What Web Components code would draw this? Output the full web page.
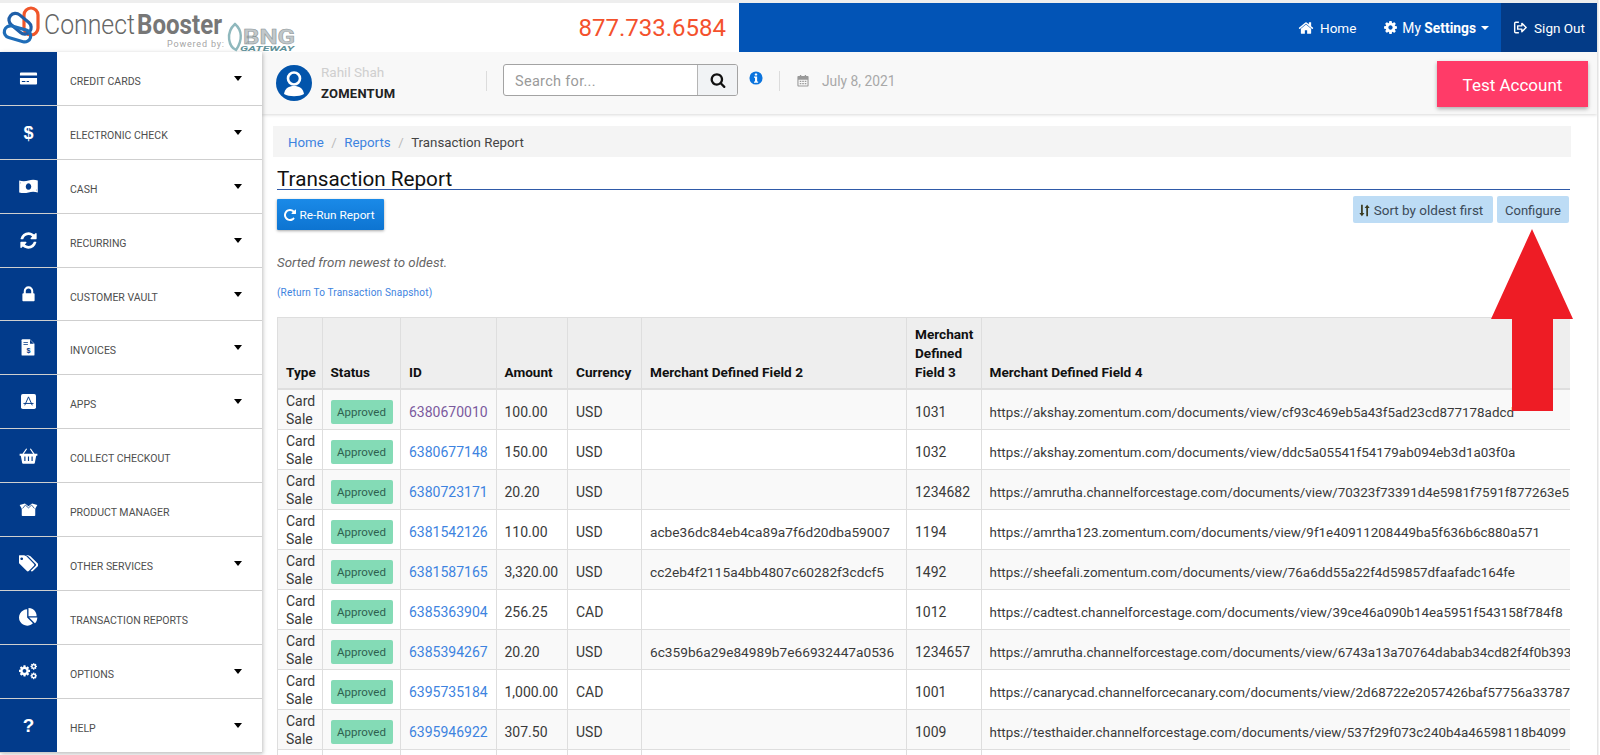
<!DOCTYPE html>
<html>
<head>
<meta charset="utf-8">
<title>Transaction Report</title>
<style>
    html, body { margin: 0; height: 755px; overflow: hidden; background: #fff; }
    body { font-family: Roboto, "Liberation Sans", sans-serif; color: #333; }
</style>
</head>
<body>
<cb-app>
    <cb-header></cb-header>
    <cb-sidebar>
        <cb-nav-item icon="card" caret>Credit Cards</cb-nav-item>
        <cb-nav-item icon="dollar" caret>Electronic Check</cb-nav-item>
        <cb-nav-item icon="money" caret>Cash</cb-nav-item>
        <cb-nav-item icon="refresh" caret>Recurring</cb-nav-item>
        <cb-nav-item icon="lock" caret>Customer Vault</cb-nav-item>
        <cb-nav-item icon="invoice" caret>Invoices</cb-nav-item>
        <cb-nav-item icon="apps" caret>Apps</cb-nav-item>
        <cb-nav-item icon="basket">Collect Checkout</cb-nav-item>
        <cb-nav-item icon="box">Product Manager</cb-nav-item>
        <cb-nav-item icon="tags" caret>Other Services</cb-nav-item>
        <cb-nav-item icon="pie">Transaction Reports</cb-nav-item>
        <cb-nav-item icon="cogs" caret>Options</cb-nav-item>
        <cb-nav-item icon="question" caret>Help</cb-nav-item>
    </cb-sidebar>
    <cb-main>
        <cb-topbar></cb-topbar>
        <cb-report></cb-report>
    </cb-main>
    <cb-arrow></cb-arrow>
</cb-app>

<script>
// FontAwesome 4 style paths, all on the 1792 grid
const ICONS = {
    home: 'M1472 992v480q0 26-19 45t-45 19h-384v-384h-256v384h-384q-26 0-45-19t-19-45v-480q0-1 .5-3t.5-3l575-474 575 474q1 2 1 6zm223-69l-62 74q-8 9-21 11h-3q-13 0-21-7l-692-577-692 577q-12 8-24 7-13-2-21-11l-62-74q-8-10-7-23.5t11-21.5l719-599q32-26 76-26t76 26l244 204v-195q0-14 9-23t23-9h192q14 0 23 9t9 23v408l219 182q10 8 11 21.5t-7 23.5z',
    cog: 'M1152 896q0-106-75-181t-181-75-181 75-75 181 75 181 181 75 181-75 75-181zm512-109v222q0 12-8 23t-20 13l-185 28q-19 54-39 91 35 50 107 138 10 12 10 25t-9 23q-27 37-99 108t-94 71q-12 0-26-9l-138-108q-44 23-91 38-16 136-29 186-7 28-36 28h-222q-14 0-24.5-8.5t-11.5-21.5l-28-184q-49-16-90-37l-141 107q-10 9-25 9-14 0-25-11-126-114-165-168-7-10-7-23 0-12 8-23 15-21 51-66.5t54-70.5q-27-50-41-99l-183-27q-13-2-21-12.5t-8-23.5v-222q0-12 8-23t19-13l186-28q14-46 39-92-40-57-107-138-10-12-10-24 0-10 9-23 26-36 98.5-107.5t94.5-71.5q13 0 26 10l138 107q44-23 91-38 16-136 29-186 7-28 36-28h222q14 0 24.5 8.5t11.5 21.5l28 184q49 16 90 37l142-107q9-9 24-9 13 0 25 10 129 119 165 170 7 8 7 22 0 12-8 23-15 21-51 66.5t-54 70.5q26 50 41 98l183 28q13 2 21 12.5t8 23.5z',
    search: 'M1216 832q0-185-131.5-316.5t-316.5-131.5-316.5 131.5-131.5 316.5 131.5 316.5 316.5 131.5 316.5-131.5 131.5-316.5zm512 832q0 52-38 90t-90 38q-54 0-90-38l-343-342q-179 124-399 124-143 0-273.5-55.5t-225-150-150-225-55.5-273.5 55.5-273.5 150-225 225-150 273.5-55.5 273.5 55.5 225 150 150 225 55.5 273.5q0 220-124 399l343 343q37 37 37 90z',
    refresh: 'M1639 1056q0 5-1 7-64 268-268 434.5t-478 166.5q-146 0-282.5-55t-243.5-157l-129 129q-19 19-45 19t-45-19-19-45v-448q0-26 19-45t45-19h448q26 0 45 19t19 45-19 45l-137 137q71 66 161 102t187 36q134 0 250-65t186-179q11-17 53-117 8-23 30-23h192q13 0 22.5 9.5t9.5 22.5zm25-800v448q0 26-19 45t-45 19h-448q-26 0-45-19t-19-45 19-45l138-138q-148-137-349-137-134 0-250 65t-186 179q-11 17-53 117-8 23-30 23h-199q-13 0-22.5-9.5t-9.5-22.5v-7q65-268 270-434.5t480-166.5q146 0 284 55.5t245 156.5l130-129q19-19 45-19t45 19 19 45z',
    repeat: 'M1664 256v448q0 26-19 45t-45 19h-448q-42 0-59-40-17-39 14-69l138-138q-148-137-349-137-104 0-198.5 40.5t-163.5 109.5-109.5 163.5-40.5 198.5 40.5 198.5 109.5 163.5 163.5 109.5 198.5 40.5q119 0 225-52t179-147q7-10 23-12 15 0 25 9l137 138q9 8 9.5 20.5t-7.5 22.5q-109 132-264 204.5t-327 72.5q-156 0-298-61t-245-164-164-245-61-298 61-298 164-245 245-164 298-61q147 0 284.5 55.5t244.5 156.5l130-129q29-31 70-14 39 17 39 59z',
    lock: 'M640 768h512v-192q0-106-75-181t-181-75-181 75-75 181v192zm832 96v576q0 40-28 68t-68 28h-960q-40 0-68-28t-28-68v-576q0-40 28-68t68-28h32v-192q0-184 132-316t316-132 316 132 132 316v192h32q40 0 68 28t28 68z',
    tags: 'M384 448q0-53-37.5-90.5t-90.5-37.5-90.5 37.5-37.5 90.5 37.5 90.5 90.5 37.5 90.5-37.5 37.5-90.5zm1067 576q0 53-37 90l-491 492q-39 37-91 37-53 0-90-37l-715-716q-38-37-64.5-101t-26.5-117v-416q0-52 38-90t90-38h416q53 0 117 26.5t102 64.5l715 714q37 39 37 91zm384 0q0 53-37 90l-491 492q-39 37-91 37-36 0-59-14t-53-45l470-470q37-37 37-90 0-52-37-91l-715-714q-38-38-102-64.5t-117-26.5h224q53 0 117 26.5t102 64.5l715 714q37 39 37 91z',
    pie: 'M768 890l546 546q-106 108-247.5 168t-298.5 60q-209 0-385.5-103t-279.5-279.5-103-385.5 103-385.5 279.5-279.5 385.5-103v762zm187 6h773q0 157-60 298.5t-168 247.5zm709-128h-768v-768q209 0 385.5 103t279.5 279.5 103 385.5z'
};

function fa(name, fill = 'currentColor', extra = '') {
    return `<path fill="${fill}" ${extra} d="${ICONS[name]}"/>`;
}

// hand drawn ones, same 1792 grid so cb-icon can treat them alike
const DRAWN = {
    card: `<path fill="currentColor" fill-rule="evenodd" d="M180 330h1432q90 0 90 90v950q0 90-90 90H180q-90 0-90-90V420q0-90 90-90zM90 620v240h1612V620zM270 1120v110h330v-110zM720 1120v110h220v-110z"/>`,
    money: `<path fill="currentColor" fill-rule="evenodd" d="M20 330q440 120 876 0t876 0v1130q-440-120-876 0t-876 0zM896 590a260 310 0 1 0 .1 0zM130 500a110 110 0 0 1-20 140V500zM1660 1290a110 110 0 0 1 20-140v140z"/>`,
    invoice: `<path fill="currentColor" d="M330 120h700l430 430v1020q0 90-90 90H330q-90 0-90-90V210q0-90 90-90z"/><path fill="#033a86" d="M1040 170l370 380h-370zM420 400h420v70H420zM420 560h420v70H420z"/><text x="896" y="1440" text-anchor="middle" font-family="Liberation Sans" font-weight="700" font-size="680" fill="#033a86">$</text>`,
    apps: `<rect x="190" y="190" width="1412" height="1412" rx="170" fill="currentColor"/><path fill="none" stroke="#033a86" stroke-width="90" d="M896 460L540 1260M896 460l356 800M420 1080h950"/>`,
    basket: `<path fill="currentColor" fill-rule="evenodd" d="M60 720h1672v200h-110l-130 680q-10 70-90 70H390q-80 0-90-70L170 920H60zM500 980v440h110V980zM840 980v440h110V980zM1180 980v440h110V980z"/><path fill="none" stroke="currentColor" stroke-width="110" d="M370 760L720 260M1420 760L1070 260"/>`,
    box: `<path fill="currentColor" d="M60 470L560 340 896 590 1232 340 1732 470 1540 790H252z"/><path fill="currentColor" d="M260 740H1532V1450q0 70-70 70H330q-70 0-70-70z"/><path fill="none" stroke="#033a86" stroke-width="70" d="M340 800L600 480 896 740 1192 480 1452 800"/>`,
    cogs: `<g transform="translate(-90 230) scale(.68)">${fa('cog')}</g><g transform="translate(1030 60) scale(.4)">${fa('cog')}</g><g transform="translate(1030 950) scale(.4)">${fa('cog')}</g>`,
    dollar: `<text x="896" y="1500" text-anchor="middle" font-family="Liberation Sans" font-weight="700" font-size="1700" fill="currentColor">$</text>`,
    question: `<text x="896" y="1540" text-anchor="middle" font-family="Liberation Sans" font-weight="700" font-size="1780" fill="currentColor">?</text>`,
    signout: `<path fill="none" stroke="currentColor" stroke-width="170" d="M700 260H330q-130 0-130 130v1010q0 130 130 130h370"/><path fill="none" stroke="currentColor" stroke-width="170" stroke-linejoin="round" d="M1060 400l510 496-510 496v-300H560V700h500z"/>`,
    info: `<circle cx="896" cy="896" r="840" fill="#0b74de"/><rect x="740" y="320" width="310" height="240" rx="50" fill="#fff"/><path fill="#fff" d="M640 700h400v640h130v150H640v-150h130V850H640z"/>`,
    calendar: `<path fill="currentColor" fill-rule="evenodd" d="M300 240h200V120h170v120h450V120h170v120h200q120 0 120 120v1110q0 120-120 120H300q-120 0-120-120V360q0-120 120-120zM320 720v740q0 20 20 20h1110q20 0 20-20V720zM480 860h200v170H480zM800 860h200v170H800zM1120 860h200v170h-200zM480 1150h200v170H480zM800 1150h200v170H800zM1120 1150h200v170h-200z"/>`,
    sort: `<path fill="currentColor" d="M420 120h240v1130h230L540 1680 190 1250h230z"/><path fill="currentColor" d="M1140 1680h240V550h230L1260 120 910 550h230z"/>`
};

class CbIcon extends HTMLElement {
    constructor() {
        super();
        this.attachShadow({ mode: 'open' });
    }

    connectedCallback() {
        const name = this.getAttribute('name');
        const size = this.getAttribute('size') || 16;
        const inner = DRAWN[name] || fa(name);
        this.shadowRoot.innerHTML = `
            <style>
                :host { display: inline-flex; width: ${size}px; height: ${size}px; flex: none; }
                svg { width: 100%; height: 100%; display: block; }
            </style>
            <svg viewBox="0 0 1792 1792" aria-hidden="true">${inner}</svg>
        `;
    }
}

class CbApp extends HTMLElement {
    constructor() {
        super();
        this.attachShadow({ mode: 'open' });
        this.shadowRoot.innerHTML = `
            <style>
                :host {
                    display: grid;
                    grid-template-columns: 262px 1fr;
                    grid-template-rows: 49px 703px;
                    width: 1597px;
                    height: 755px;
                    box-sizing: border-box;
                    border-top: 3px solid #eeeeee;
                    position: relative;
                    overflow: hidden;
                    box-shadow: 1.5px 0 0 #e4e4e4;
                }
                ::slotted(cb-header) { grid-column: 1 / 3; }
            </style>
            <slot></slot>
        `;
    }
}

class CbHeader extends HTMLElement {
    constructor() {
        super();
        this.attachShadow({ mode: 'open' });
        this.shadowRoot.innerHTML = `
            <style>
                :host { display: flex; height: 49px; position: relative; z-index: 2; }
                .brand { width: 739px; display: flex; justify-content: space-between; align-items: center; padding-right: 13px; box-sizing: border-box; }
                .logo { flex: none; display: block; }
                .phone { font-size: 24px; color: #f4512c; }
                nav { flex: 1; display: flex; justify-content: flex-end; background: #0254b6; color: #fff; font-size: 13.5px; }
                .link { display: flex; align-items: center; gap: 6px; }
                .home { margin-right: 27px; }
                .settings { margin-right: 12px; gap: 4px; font-size: 13.8px; }
                .settings b { font-weight: 700; }
                .mini { border: 4px solid transparent; border-top-color: #fff; border-bottom: 0; margin-left: 1px; }
                .out { width: 96px; background: #033b87; justify-content: center; }
            </style>
            <div class="brand">
                <svg class="logo" width="300" height="49" viewBox="0 3 300 49">
                    <g fill="none" stroke-width="3.2">
                        <rect x="24" y="8" width="14" height="27" rx="7" stroke="#f0562a"/>
                        <rect x="8" y="17" width="25" height="13" rx="6.5" stroke="#1f5fa8" transform="rotate(40 20 23)"/>
                        <rect x="4" y="28" width="27" height="12" rx="6" stroke="#1f6db8" transform="rotate(16 18 34)"/>
                    </g>
                    <text x="44" y="34" font-family="Roboto" font-size="27" font-weight="300" fill="#666" textLength="91" lengthAdjust="spacingAndGlyphs">Connect</text>
                    <text x="137" y="34" font-family="Roboto" font-size="27" font-weight="700" fill="#777" textLength="85" lengthAdjust="spacingAndGlyphs">Booster</text>
                    <text x="167" y="47" font-family="Roboto" font-size="9" fill="#a5a5a5" textLength="57">Powered by:</text>
                    <path d="M235 24c7 6 8 16 1 26-7-3-11-17-1-26z" fill="none" stroke="#8fb8bd" stroke-width="2.4"/>
                    <text x="243" y="44" font-family="Roboto" font-size="20" font-weight="700" fill="#c2c8ca" stroke="#8c9699" stroke-width=".5" textLength="52" lengthAdjust="spacingAndGlyphs">BNG</text>
                    <text x="240" y="50.5" font-family="Roboto" font-size="6.5" font-weight="700" font-style="italic" fill="#5f9199" textLength="54" lengthAdjust="spacingAndGlyphs">GATEWAY</text>
                </svg>
                <span class="phone">877.733.6584</span>
            </div>
            <nav>
                <span class="link home"><cb-icon name="home" size="16"></cb-icon>Home</span>
                <span class="link settings"><cb-icon name="cog" size="15"></cb-icon><span>My <b>Settings</b></span><i class="mini"></i></span>
                <span class="link out"><cb-icon name="signout" size="15"></cb-icon>Sign Out</span>
            </nav>
        `;
    }
}

class CbSidebar extends HTMLElement {
    constructor() {
        super();
        this.attachShadow({ mode: 'open' });
        this.shadowRoot.innerHTML = `
            <style>
                :host {
                    display: grid;
                    grid-auto-rows: 53.9px;
                    align-content: start;
                    background: #fff;
                    box-shadow: 1px 1px 4px rgba(0,0,0,.25);
                    position: relative;
                    z-index: 1;
                    height: 700.7px;
                }
            </style>
            <slot></slot>
        `;
    }
}

class CbNavItem extends HTMLElement {
    constructor() {
        super();
        this.attachShadow({ mode: 'open' });
    }

    connectedCallback() {
        const caret = this.hasAttribute('caret') ? '<i class="caret"></i>' : '';
        this.shadowRoot.innerHTML = `
            <style>
                :host { display: flex; border-bottom: 1.5px solid #cfcfcf; box-sizing: border-box; }
                .side { width: 57px; background: #023b8b; color: #fff; display: flex; justify-content: center; padding-top: 17px; box-sizing: border-box; }
                .label { flex: 1; padding: 23px 0 0 13px; font-size: 10.5px; line-height: 14px; color: #4e4e4e; text-transform: uppercase; }
                .caret { margin: 24px 20px 0 0; border: 4.5px solid transparent; border-top: 5px solid #000; border-bottom: 0; height: 0; }
            </style>
            <div class="side"><cb-icon name="${this.getAttribute('icon')}" size="19"></cb-icon></div>
            <div class="label"><slot></slot></div>
            ${caret}
        `;
    }
}

class CbMain extends HTMLElement {
    constructor() {
        super();
        this.attachShadow({ mode: 'open' });
        this.shadowRoot.innerHTML = `
            <style>
                :host { display: flex; flex-direction: column; min-width: 0; overflow: hidden; }
            </style>
            <slot></slot>
        `;
    }
}

class CbTopbar extends HTMLElement {
    constructor() {
        super();
        this.attachShadow({ mode: 'open' });
        this.shadowRoot.innerHTML = `
            <style>
                :host {
                    display: flex;
                    align-items: flex-start;
                    height: 62px;
                    box-sizing: border-box;
                    padding: 12px 9px 0 14px;
                    background: #f8f8f8;
                    box-shadow: 0 1px 3px rgba(0,0,0,.15);
                    flex: none;
                }
                .avatar { margin-top: 1px; flex: none; }
                .who { width: 165px; margin-left: 9px; flex: none; }
                .name { font-size: 13.5px; line-height: 16px; color: #cfcfcf; }
                .org { font-size: 13px; line-height: 16px; font-weight: 700; color: #222; margin-top: 6px; letter-spacing: .25px; }
                .sep { width: 1px; height: 20px; background: #dcdcdc; margin-top: 7px; flex: none; }
                .search { display: flex; width: 235px; height: 32px; margin-left: 16px; box-sizing: border-box; border: 1px solid #a3a3a3; border-radius: 3px; background: #fff; flex: none; }
                .search span { flex: 1; padding-left: 11px; font-size: 14.5px; letter-spacing: .3px; line-height: 33px; height: 30px; color: #9a9a9a; }
                .search button { width: 40px; border: 0; border-left: 1px solid #b5b5b5; background: #f1f3f5; color: #111; padding: 0; display: flex; align-items: center; justify-content: center; border-radius: 0 2px 2px 0; }
                .info { margin: 7px 0 0 11px; }
                .date { display: flex; align-items: center; gap: 12px; color: #a8a8a8; font-size: 13.8px; margin: 9px 0 0 16px; }
                .date cb-icon { color: #999; }
                .test { margin: -3px 0 0 auto; width: 151px; height: 46px; padding-top: 1px; box-sizing: border-box; background: #ff3b68; color: #fff; font-size: 17px; display: flex; align-items: center; justify-content: center; box-shadow: 0 2px 4px rgba(0,0,0,.3); flex: none; }
            </style>
            <svg class="avatar" width="36" height="36" viewBox="0 0 36 36">
                <circle cx="18" cy="18" r="18" fill="#0254ab"/>
                <circle cx="18" cy="13.5" r="6" fill="none" stroke="#fff" stroke-width="2.6"/>
                <path d="M8 29c1-6 5-8 10-8s9 2 10 8c-5 3-15 3-20 0z" fill="#fff"/>
            </svg>
            <div class="who"><div class="name">Rahil Shah</div><div class="org">ZOMENTUM</div></div>
            <div class="sep"></div>
            <div class="search"><span>Search for...</span><button><cb-icon name="search" size="16"></cb-icon></button></div>
            <cb-icon class="info" name="info" size="14"></cb-icon>
            <div class="sep" style="margin-left:16px"></div>
            <div class="date"><cb-icon name="calendar" size="14"></cb-icon>July 8, 2021</div>
            <div class="test">Test Account</div>
        `;
    }
}

class CbBadge extends HTMLElement {
    constructor() {
        super();
        this.attachShadow({ mode: 'open' });
        this.shadowRoot.innerHTML = `
            <style>
                :host { display: block; width: 62px; height: 24px; line-height: 25px; background: #84dbb6; color: #2f6150; font-size: 11.5px; text-align: center; border-radius: 2px; }
            </style>
            <slot></slot>
        `;
    }
}

const ROWS = [
    ['6380670010', '100.00', 'USD', '', '1031', 'https://akshay.zomentum.com/documents/view/cf93c469eb5a43f5ad23cd877178adcd'],
    ['6380677148', '150.00', 'USD', '', '1032', 'https://akshay.zomentum.com/documents/view/ddc5a05541f54179ab094eb3d1a03f0a'],
    ['6380723171', '20.20', 'USD', '', '1234682', 'https://amrutha.channelforcestage.com/documents/view/70323f73391d4e5981f7591f877263e5'],
    ['6381542126', '110.00', 'USD', 'acbe36dc84eb4ca89a7f6d20dba59007', '1194', 'https://amrtha123.zomentum.com/documents/view/9f1e40911208449ba5f636b6c880a571'],
    ['6381587165', '3,320.00', 'USD', 'cc2eb4f2115a4bb4807c60282f3cdcf5', '1492', 'https://sheefali.zomentum.com/documents/view/76a6dd55a22f4d59857dfaafadc164fe'],
    ['6385363904', '256.25', 'CAD', '', '1012', 'https://cadtest.channelforcestage.com/documents/view/39ce46a090b14ea5951f543158f784f8'],
    ['6385394267', '20.20', 'USD', '6c359b6a29e84989b7e66932447a0536', '1234657', 'https://amrutha.channelforcestage.com/documents/view/6743a13a70764dabab34cd82f4f0b393'],
    ['6395735184', '1,000.00', 'CAD', '', '1001', 'https://canarycad.channelforcecanary.com/documents/view/2d68722e2057426baf57756a33787'],
    ['6395946922', '307.50', 'USD', '', '1009', 'https://testhaider.channelforcestage.com/documents/view/537f29f073c240b4a46598118b4099']
];

class CbTable extends HTMLElement {
    constructor() {
        super();
        this.attachShadow({ mode: 'open' });
    }

    connectedCallback() {
        const body = ROWS.map((r, i) => `
            <tr>
                <td>Card Sale</td>
                <td><cb-badge>Approved</cb-badge></td>
                <td><a class="${i === 0 ? 'seen' : ''}">${r[0]}</a></td>
                <td>${r[1]}</td>
                <td>${r[2]}</td>
                <td class="hash">${r[3]}</td>
                <td>${r[4]}</td>
                <td class="url">${r[5]}</td>
            </tr>`).join('');
        this.shadowRoot.innerHTML = `
            <style>
                :host { display: block; overflow: hidden; width: 1293px; margin-top: 17px; }
                table { border-collapse: collapse; table-layout: fixed; width: 1400px; font-size: 14px; line-height: 19px; color: #3a3a3a; }
                th, td { border: 1px solid #dedede; padding: 6px 8px 0; text-align: left; box-sizing: border-box; white-space: nowrap; overflow: hidden; }
                th { background: #eeeeee; color: #111; font-size: 13.6px; font-weight: 700; vertical-align: bottom; padding: 0 8px 6px; white-space: normal; border-bottom-width: 2px; }
                tr.head { height: 71px; }
                tbody tr { height: 40px; }
                tbody tr:nth-child(odd) { background: #f9f9f9; }
                td:first-child { white-space: normal; padding-top: 2px; line-height: 18.5px; }
                td.url { font-size: 13.4px; }
                td.hash { font-size: 13.7px; }
                a { color: #3d83e0; }
                a.seen { color: #7b5a9e; }
            </style>
            <table>
                <colgroup>
                    <col style="width:44.5px"><col style="width:78.5px"><col style="width:95.5px"><col style="width:71.5px">
                    <col style="width:74px"><col style="width:265px"><col style="width:74.5px"><col>
                </colgroup>
                <thead>
                    <tr class="head"><th>Type</th><th>Status</th><th>ID</th><th>Amount</th><th>Currency</th><th>Merchant Defined Field 2</th><th>Merchant Defined Field 3</th><th>Merchant Defined Field 4</th></tr>
                </thead>
                <tbody>${body}
                    <tr><td></td><td></td><td></td><td></td><td></td><td></td><td></td><td></td></tr>
                </tbody>
            </table>
        `;
    }
}

class CbReport extends HTMLElement {
    constructor() {
        super();
        this.attachShadow({ mode: 'open' });
        this.shadowRoot.innerHTML = `
            <style>
                :host { display: block; padding: 12px 26px 0 11px; flex: none; }
                .crumbs { height: 31px; padding-top: 1px; box-sizing: border-box; background: #f4f4f4; display: flex; align-items: center; gap: 7.5px; padding-left: 15px; font-size: 13.3px; color: #444; }
                .crumbs a { color: #3d83e0; }
                .crumbs i { font-style: normal; color: #bbb; }
                .body { margin: 0 1px 0 4px; }
                h1 { font-size: 20.7px; line-height: 19px; font-weight: 400; color: #111; margin: 13px 0 0; border-bottom: 1px solid #2f5aa8; padding-bottom: 0; }
                .tools { display: flex; justify-content: space-between; align-items: flex-start; }
                .rerun { margin-top: 9px; width: 107px; height: 31px; padding: 1px 3px 0 0; box-sizing: border-box; background: linear-gradient(#1a8ae8, #0d74d1); color: #fff; font-size: 11.8px; display: flex; align-items: center; justify-content: center; gap: 2px; border-radius: 1px; box-shadow: 0 1px 3px rgba(0,0,0,.35); }
                .right { display: flex; gap: 4px; margin: 6px 1px 0 0; }
                .soft { height: 27px; padding-top: 1px; box-sizing: border-box; background: #bddcf5; color: #3c4a58; font-size: 13px; display: flex; align-items: center; justify-content: center; gap: 3px; border-radius: 2px; }
                .sort { width: 140px; font-size: 13.5px; padding-right: 5px; }
                .conf { width: 72px; }
                .sort cb-icon { color: #3b3b20; }
                .note { margin: 23px 0 0; font-size: 13.3px; line-height: 20px; font-style: italic; color: #666; }
                .back { display: block; margin-top: 13px; font-size: 10px; line-height: 14px; letter-spacing: .2px; color: #3d83e0; }
            </style>
            <div class="crumbs"><a>Home</a><i>/</i><a>Reports</a><i>/</i><span>Transaction Report</span></div>
            <div class="body">
                <h1>Transaction Report</h1>
                <div class="tools">
                    <div class="rerun"><cb-icon name="repeat" size="14"></cb-icon>Re-Run Report</div>
                    <div class="right">
                        <div class="soft sort"><cb-icon name="sort" size="13"></cb-icon>Sort by oldest first</div>
                        <div class="soft conf">Configure</div>
                    </div>
                </div>
                <p class="note">Sorted from newest to oldest.</p>
                <a class="back">(Return To Transaction Snapshot)</a>
                <cb-table></cb-table>
            </div>
        `;
    }
}

class CbArrow extends HTMLElement {
    constructor() {
        super();
        this.attachShadow({ mode: 'open' });
        this.shadowRoot.innerHTML = `
            <style>
                :host { position: absolute; left: 1491px; top: 226px; width: 82px; height: 182px; z-index: 3; }
                svg { display: block; }
            </style>
            <svg width="82" height="182" viewBox="0 0 82 182"><path fill="#ee1c25" d="M41 0l41 90H62v92H21V90H0z"/></svg>
        `;
    }
}

customElements.define('cb-icon', CbIcon);
customElements.define('cb-app', CbApp);
customElements.define('cb-header', CbHeader);
customElements.define('cb-sidebar', CbSidebar);
customElements.define('cb-nav-item', CbNavItem);
customElements.define('cb-main', CbMain);
customElements.define('cb-topbar', CbTopbar);
customElements.define('cb-badge', CbBadge);
customElements.define('cb-table', CbTable);
customElements.define('cb-report', CbReport);
customElements.define('cb-arrow', CbArrow);
</script>
</body>
</html>
